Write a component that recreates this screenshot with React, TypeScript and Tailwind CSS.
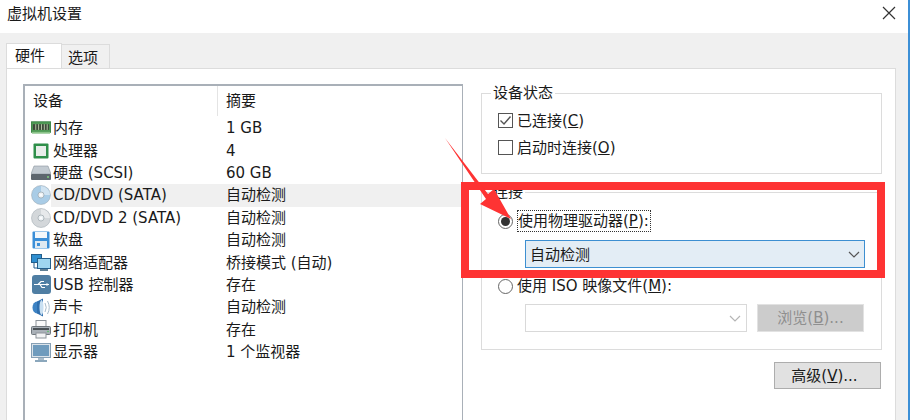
import type { ReactNode } from "react";

const FONT = "font-['DejaVu_Sans','Noto_Sans_CJK_SC',sans-serif]";

const RamIcon = () => (
    <svg width="21" height="14" viewBox="0 0 21 14">
        <rect x="0.5" y="0.5" width="20" height="11" fill="#4f9a55" stroke="#3d8446" />
        <rect x="2" y="3" width="17" height="6" fill="#3c4a3a" />
        <path d="M5 3v6M8 3v6M11 3v6M14 3v6M17 3v6" stroke="#b8c9a8" />
        <rect x="1" y="11" width="19" height="2" fill="#8cc48a" />
    </svg>
);

const CpuIcon = () => (
    <svg width="16" height="16" viewBox="0 0 16 16">
        <rect x="0.5" y="0.5" width="15" height="15" fill="#2f8f4a" rx="1" />
        <rect x="3" y="3" width="10" height="10" fill="#e8eeea" />
    </svg>
);

const DiskIcon = () => (
    <svg width="20" height="15" viewBox="0 0 20 15">
        <path d="M3 1h14l3 8H0z" fill="#c3cbd2" stroke="#8b959e" strokeWidth="0.6" />
        <rect x="0" y="9" width="20" height="6" fill="#5d666e" rx="1" />
        <circle cx="17" cy="12" r="1" fill="#7fd07f" />
    </svg>
);

const DiscIcon = ({ tint }: { tint: string }) => (
    <svg width="20" height="20" viewBox="0 0 20 20">
        <circle cx="10" cy="10" r="9.5" fill={tint} stroke="#9aa5ad" strokeWidth="0.5" />
        <path d="M10 1a9 9 0 0 1 9 9h-6a3 3 0 0 0-3-3z" fill="#ffffff" opacity="0.45" />
        <circle cx="10" cy="10" r="3" fill="#eef2f5" stroke="#8d98a0" strokeWidth="0.6" />
        <circle cx="10" cy="10" r="1" fill="#ffffff" />
    </svg>
);

const FloppyIcon = () => (
    <svg width="18" height="18" viewBox="0 0 18 18">
        <rect x="0.5" y="0.5" width="17" height="17" fill="#3b8fd8" rx="1" />
        <rect x="3" y="1" width="12" height="6" fill="#f4f8fb" />
        <rect x="3" y="10" width="12" height="7" fill="#dfe9f1" />
        <rect x="5" y="12" width="3" height="3" fill="#3b8fd8" />
    </svg>
);

const NetIcon = () => (
    <svg width="20" height="18" viewBox="0 0 20 18">
        <rect x="0.5" y="0.5" width="10" height="8" fill="#2f8fd0" stroke="#245f8c" />
        <path d="M3 9v5h4" fill="none" stroke="#245f8c" />
        <rect x="6.5" y="4.5" width="13" height="10" fill="#9fd6f0" stroke="#245f8c" />
        <rect x="9" y="15" width="8" height="2" fill="#5e7f95" />
    </svg>
);

const UsbIcon = () => (
    <svg width="19" height="19" viewBox="0 0 19 19">
        <rect width="19" height="19" rx="3" fill="#4f7ea3" />
        <path d="M2 9.5h15M6 9.5l3-3h3M8 9.5l2 3h3" fill="none" stroke="#ffffff" strokeWidth="1.2" />
        <path d="M17 9.5l-2.5-1.5v3z" fill="#ffffff" />
    </svg>
);

const SoundIcon = () => (
    <svg width="19" height="19" viewBox="0 0 19 19">
        <ellipse cx="5" cy="9.500" rx="4.500" ry="6" fill="#3d83c4" />
        <path d="M5 3.500L11 0.500V18.500L5 15.500Z" fill="#2f6fae" />
        <ellipse cx="9.500" cy="9.500" rx="2" ry="7.500" fill="#c9e0f2" />
        <path d="M13 5q2.500 4.500 0 9M15.500 3q3.500 6.500 0 13" fill="none" stroke="#a9bccb" />
    </svg>
);

const PrinterIcon = () => (
    <svg width="20" height="19" viewBox="0 0 20 19">
        <rect x="5" y="0.5" width="10" height="6" fill="#fafafa" stroke="#8d949a" />
        <rect x="0.5" y="6.5" width="19" height="8" rx="1" fill="#aab1b8" stroke="#71787e" />
        <rect x="2" y="8" width="16" height="2" fill="#4a5156" />
        <rect x="5" y="13" width="10" height="5" fill="#f2f3f4" stroke="#8d949a" />
        <circle cx="17" cy="11.500" r="0.8" fill="#55c060" />
    </svg>
);

const MonitorIcon = () => (
    <svg width="20" height="19" viewBox="0 0 20 19">
        <rect x="0.5" y="0.5" width="19" height="14" fill="#dbe3ea" stroke="#87a0b5" />
        <rect x="2" y="2" width="16" height="11" fill="#6f9bbd" />
        <rect x="7" y="15" width="6" height="2" fill="#a9bccb" />
        <rect x="4" y="17" width="12" height="2" fill="#8ba7bc" />
    </svg>
);

const rows: { icon: ReactNode; name: string; summary: string }[] = [
    { icon: <RamIcon />, name: "内存", summary: "1 GB" },
    { icon: <CpuIcon />, name: "处理器", summary: "4" },
    { icon: <DiskIcon />, name: "硬盘 (SCSI)", summary: "60 GB" },
    { icon: <DiscIcon tint="#a9cce6" />, name: "CD/DVD (SATA)", summary: "自动检测" },
    { icon: <DiscIcon tint="#d3d7da" />, name: "CD/DVD 2 (SATA)", summary: "自动检测" },
    { icon: <FloppyIcon />, name: "软盘", summary: "自动检测" },
    { icon: <NetIcon />, name: "网络适配器", summary: "桥接模式 (自动)" },
    { icon: <UsbIcon />, name: "USB 控制器", summary: "存在" },
    { icon: <SoundIcon />, name: "声卡", summary: "自动检测" },
    { icon: <PrinterIcon />, name: "打印机", summary: "存在" },
    { icon: <MonitorIcon />, name: "显示器", summary: "1 个监视器" },
];

const Chevron = ({ color }: { color: string }) => (
    <svg width="12" height="7" viewBox="0 0 12 7">
        <path d="M1 1l5 5 5-5" fill="none" stroke={color} strokeWidth="1.2" />
    </svg>
);

const Radio = ({ checked }: { checked?: boolean }) => (
    <span className="flex h-[15px] w-[15px] shrink-0 items-center justify-center rounded-full border border-[#666666] bg-white">
        {checked && <span className="h-[9px] w-[9px] rounded-full bg-[#333333]" />}
    </span>
);

const Check = ({ checked, children }: { checked?: boolean; children: ReactNode }) => (
    <div className="flex h-[27px] items-center gap-[4px]">
        <span className="flex h-[15px] w-[15px] items-center justify-center border border-[#555555] bg-white">
            {checked && (
                <svg width="13" height="11" viewBox="0 0 13 11">
                    <path d="M1.500 5.500l3.500 3.500 6.500-7.500" fill="none" stroke="#555555" strokeWidth="1.400" />
                </svg>
            )}
        </span>
        <span>{children}</span>
    </div>
);

const Group = ({ title, className, children }: { title: string; className: string; children: ReactNode }) => (
    <div className={`relative border border-[#dcdcdc] ${className}`}>
        <span className="absolute -top-[12px] left-[9px] bg-white px-[2px] leading-[22px]">{title}</span>
        {children}
    </div>
);

export default function App() {
    return (
        <div className={`relative h-[420px] w-[910px] overflow-hidden bg-white text-[15px] leading-[22px] text-[#1a1a1a] ${FONT}`}>
            <div className="flex h-[33px] items-start justify-between pl-[7px] pr-[14px] pt-[3px]">
                <span>虚拟机设置</span>
                <svg className="mt-[3px]" width="14" height="14" viewBox="0 0 14 14">
                    <path d="M1 1l12 12M13 1L1 13" stroke="#333333" strokeWidth="1.200" />
                </svg>
            </div>

            <div className="flex h-[387px] w-[908px] flex-col bg-[#f0f0f0] pl-[6px] pr-[12px] pt-[10px]">
                <div className="flex h-[25px] items-end">
                    <div className="flex h-[25px] w-[56px] items-start border border-b-0 border-[#dcdcdc] bg-white pl-[8px] pt-[1px]">硬件</div>
                    <div className="flex h-[24px] w-[48px] items-center border border-b-0 border-l-0 border-[#dcdcdc] bg-[#f0f0f0] pl-[6px] pt-[2px]">选项</div>
                </div>

                <div className="flex flex-1 border-l border-r border-t border-[#dcdcdc] bg-white pl-[16px] pt-[15px]">
                    <div className="h-[400px] w-[440px] border-l-2 border-r border-t-2 border-[#a9b0b8]">
                        <div className="flex h-[30px] items-center">
                            <span className="w-[192px] pl-[8px]">设备</span>
                            <span className="h-full border-l border-[#e4e4e4] pl-[8px] leading-[31px]">摘要</span>
                        </div>
                        <div className="pt-[1px]">
                            {rows.map((row, i) => (
                                <div key={row.name} className="flex h-[22.400px] items-center">
                                    <span className="flex w-[26px] shrink-0 items-center justify-center pl-[6px]">{row.icon}</span>
                                    <div className={`flex h-full flex-1 items-center ${i === 3 ? "bg-[#f0f0f0]" : ""}`}>
                                        <span className="w-[175px] pl-[2px]">{row.name}</span>
                                        <span>{row.summary}</span>
                                    </div>
                                </div>
                            ))}
                        </div>
                    </div>

                    <div className="ml-[18px] w-[401px] pt-[9px]">
                        <Group title="设备状态" className="h-[81px] pl-[16px] pt-[13px]">
                            <Check checked>已连接(<u>C</u>)</Check>
                            <Check>启动时连接(<u>O</u>)</Check>
                        </Group>

                        <Group title="连接" className="mt-[18px] h-[158px] pl-[16px] pt-[17px]">
                            <div className="flex h-[22px] items-center gap-[4px]">
                                <Radio checked />
                                <span className="border border-dotted border-[#333333] pr-[1px] leading-[20px]">使用物理驱动器(<u>P</u>):</span>
                            </div>
                            <div className="ml-[27px] mt-[8px] flex h-[28px] w-[340px] items-center justify-between border border-[#3d8fd1] bg-[#e3edf5] pl-[4px] pr-[4px]">
                                <span className="pt-[2px]">自动检测</span>
                                <Chevron color="#555555" />
                            </div>
                            <div className="mt-[7px] flex h-[22px] items-center gap-[4px]">
                                <Radio />
                                <span>使用 ISO 映像文件(<u>M</u>):</span>
                            </div>
                            <div className="ml-[27px] mt-[7px] flex items-center gap-[10px]">
                                <div className="flex h-[28px] w-[222px] items-center justify-end border border-[#d9d9d9] bg-white pr-[5px]">
                                    <Chevron color="#b5b5b5" />
                                </div>
                                <div className="flex h-[28px] w-[107px] items-center justify-center border border-[#e2e2e2] bg-[#cccccc] text-[#8f8f8f]">
                                    浏览(<u>B</u>)...
                                </div>
                            </div>
                        </Group>

                        <div className="mt-[12px] flex justify-end">
                            <button className="mr-[1px] flex h-[27px] w-[107px] items-center justify-center border border-[#adadad] bg-[#e1e1e1] pr-[6px]">
                                高级(<u>V</u>)...
                            </button>
                        </div>
                    </div>
                </div>
            </div>

            <div className="absolute right-0 top-0 h-full w-[2px] bg-[#3c8fd6]" />

            {/* red annotation */}
            <div className="pointer-events-none absolute left-[461px] top-[182px] h-[96px] w-[424px] border-[8px] border-[#fe3333]" />
            <svg className="pointer-events-none absolute left-0 top-0" width="910" height="420" viewBox="0 0 910 420">
                <path d="M445 138L488 194L494 189L511 219L480 204L486 199Z" fill="#fe3333" />
            </svg>
        </div>
    );
}
